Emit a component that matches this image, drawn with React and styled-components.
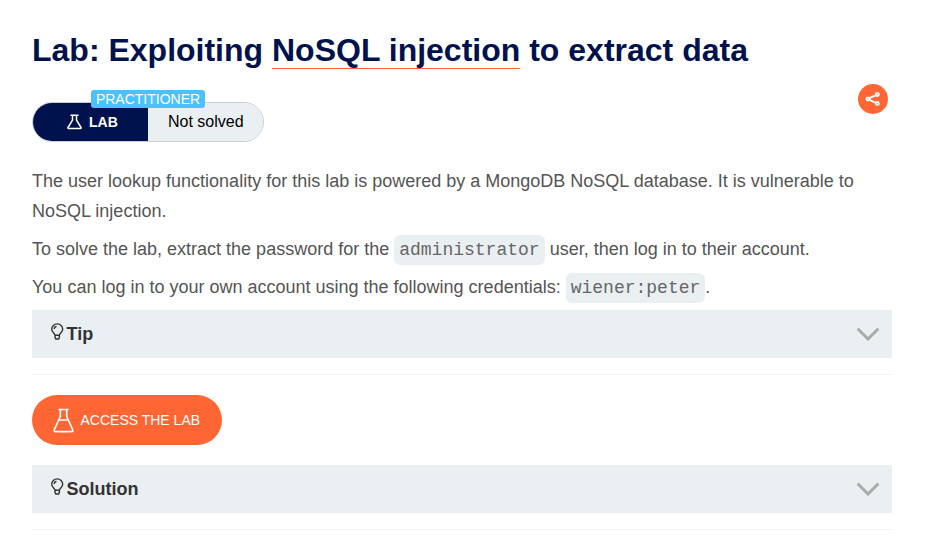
import React from 'react';
import styled, { createGlobalStyle } from 'styled-components';

const Global = createGlobalStyle`
  * { box-sizing: border-box; }
  body { margin: 0; background: #fff; font-family: "Liberation Sans", Arial, sans-serif; overflow: hidden; }
`;
const Page = styled.main`width: 860px; margin-left: 32px; height: 536px; overflow: hidden;`;
const Title = styled.h1`
  margin: 29px 0 0; height: 54px; color: #00124d; white-space: nowrap;
  font: 700 32px/42px "Liberation Sans", Arial, sans-serif;
`;
const TitleLink = styled.a`border-bottom: 1px solid #ff6633;`;
const StatusRow = styled.div`display: flex; justify-content: space-between; height: 83px;`;
const Status = styled.div`
  position: relative; display: flex; width: 232px; height: 40px; margin-top: 19px;
  border: 1px solid #c9cfd3; border-radius: 20px; font-size: 16px;
`;
const Kind = styled.div`
  display: flex; align-items: center; gap: 7px; width: 115px; padding-left: 34px;
  border-radius: 19px 0 0 19px; background: #00124d; color: #fff; font-weight: 700; font-size: 14px;
`;
const State = styled.div`
  flex: 1; display: flex; align-items: center; padding-left: 20px;
  border-radius: 0 19px 19px 0; background: #eaeff2; color: #000;
`;
const Level = styled.span`
  position: absolute; left: 58px; top: -13px; height: 18px; width: 114px; text-align: center;
  border-radius: 3px; background: #4cc1ff; color: #fff; font-size: 14px; line-height: 18px;
`;
const Share = styled.button`
  display: grid; place-items: center; width: 30px; height: 30px; margin: 1px 4px 0 0; padding: 0;
  border: 0; border-radius: 50%; background: #ff6633;
`;
const Text = styled.p`margin: 0 0 8px; color: #555; font-size: 18px; line-height: 30px; white-space: nowrap;`;
const Code = styled.code`
  display: inline-block; height: 30px; margin: 1px 0 -1px; padding: 0 5px; border-radius: 6px; background: #eaeff2;
  font: 18px/30px "Liberation Mono", monospace; vertical-align: top; color: #666;
`;
const Panel = styled.div`
  display: flex; align-items: center; height: 48px; padding: 0 12px 0 18px;
  background: #eaeff2; color: #333; font-size: 18px; font-weight: 700;
`;
const PanelLabel = styled.span`flex: 1; margin-left: 2.5px;`;
const Rule = styled.div`height: 1px; margin: 16px 0 20px; background: #f3f3f3;`;
const Access = styled.button`
  display: flex; align-items: center; gap: 6.5px; width: 190px; height: 50px; margin: 0 0 20px; padding: 0 0 0 21px;
  border: 0; border-radius: 25px; background: #ff6633; color: #fff; font: 14px "Liberation Sans", Arial, sans-serif;
`;
const BulbIcon = styled.svg`flex: none; margin-bottom: 6px;`;

const SmallFlask = () => (
  <svg width="15" height="16" viewBox="0 0 15 16" fill="none" stroke="#fff" strokeWidth="1.5" strokeLinejoin="round">
    <path d="M3.5 1.2h8M5.500 1.200v5L1 13.500q-.3 1 .8 1h11.400q1.100 0 .8-1L9.500 6.200v-5" />
  </svg>
);
const LargeFlask = () => (
  <svg width="21" height="25" viewBox="0 0 21 25" fill="none" stroke="#fff" strokeWidth="1.700" strokeLinejoin="round">
    <path d="M5.500 1.500h10M7.300 1.500V8.500L1.400 21.500Q.6 23.700 2.600 23.700h15.800q2 0 1.200-2.200L13.700 8.500v-7M6 12h9" />
  </svg>
);
const Bulb = () => (
  <BulbIcon width="14" height="17" viewBox="0 0 14 17" fill="none" stroke="#333" strokeWidth="1.400">
    <path d="M5 12.300C5 10.300 1.700 9.400 1.700 6.200a5.500 5.300 0 0 1 11 0C12.700 9.400 9.400 10.300 9.400 12.300zM5 12.300v2L5.800 16h2.800l.8-1.700v-2M4.200 6q0-2.200 2.300-2.500" />
  </BulbIcon>
);
const Chevron = () => (
  <svg width="24" height="14" viewBox="0 0 24 14" fill="none" stroke="#aaa" strokeWidth="3" strokeLinecap="round"><path d="M2.500 2.500 12 12l9.500-9.500" /></svg>
);

const Section = ({ children }) => <Panel><Bulb /><PanelLabel>{children}</PanelLabel><Chevron /></Panel>;

export default function App() {
  return (
    <>
      <Global />
      <Page>
        <Title>Lab: Exploiting <TitleLink>NoSQL injection</TitleLink> to extract data</Title>
        <StatusRow>
          <Status>
            <Kind><SmallFlask />LAB</Kind><State>Not solved</State><Level>PRACTITIONER</Level>
          </Status>
          <Share aria-label="Share">
            <svg width="16" height="16" viewBox="0 0 16 16" fill="none" stroke="#fff" strokeWidth="1.900"><path d="M10.500 4.300 4.500 7.200M4.500 8.800l6 3" /><circle cx="12.300" cy="3.500" r="1.500" /><circle cx="3" cy="8" r="1.500" /><circle cx="12.300" cy="12.500" r="1.500" /></svg>
          </Share>
        </StatusRow>
        <Text>The user lookup functionality for this lab is powered by a MongoDB NoSQL database. It is vulnerable to<br />NoSQL injection.</Text>
        <Text>To solve the lab, extract the password for the <Code>administrator</Code> user, then log in to their account.</Text>
        <Text>You can log in to your own account using the following credentials: <Code>wiener:peter</Code>.</Text>
        <Section>Tip</Section>
        <Rule />
        <Access><LargeFlask />ACCESS THE LAB</Access>
        <Section>Solution</Section>
        <Rule />
      </Page>
    </>
  );
}
